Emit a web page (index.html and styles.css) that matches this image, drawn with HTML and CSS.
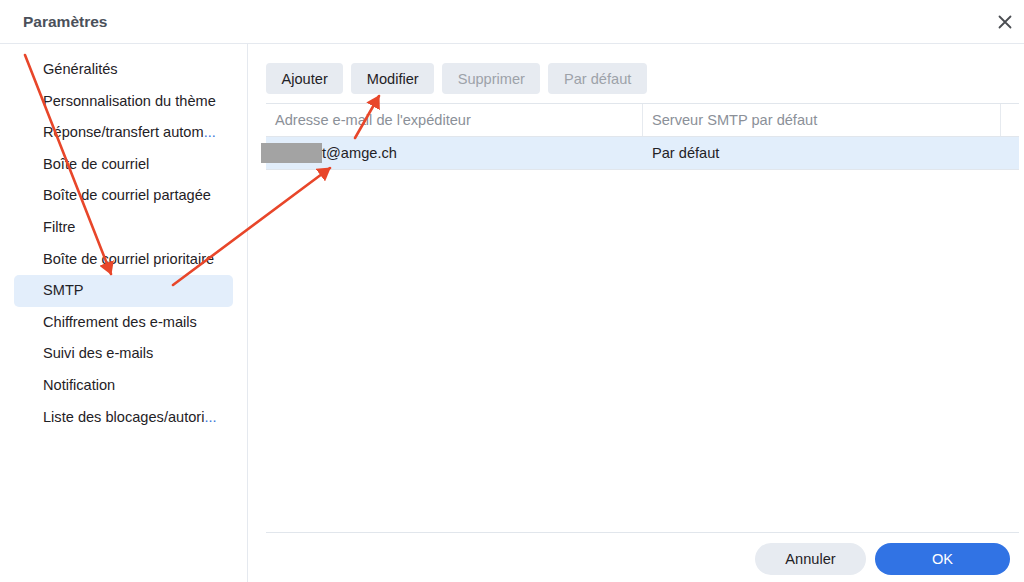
FILE: index.html
```html
<!DOCTYPE html>
<html lang="fr">
<head>
  <meta charset="UTF-8">
  <title>Paramètres</title>
  <link rel="stylesheet" href="styles.css">
</head>
<body>

<div class="dialog">
  <div class="dialog-header">
    <h1 class="dialog-title">Paramètres</h1>
    <button class="close-btn" aria-label="Fermer">
      <svg width="14" height="14" viewBox="0 0 14 14"><path d="M1.5 1.5 L12.5 12.5 M12.5 1.5 L1.5 12.5" stroke="#4a4d52" stroke-width="1.8" stroke-linecap="round"/></svg>
    </button>
  </div>

  <div class="dialog-body">
    <!-- Menu -->
    <ul class="side-menu">
      <li class="menu-item">Généralités</li>
      <li class="menu-item">Personnalisation du thème</li>
      <li class="menu-item">Réponse/transfert autom<span class="dots">...</span></li>
      <li class="menu-item">Boîte de courriel</li>
      <li class="menu-item">Boîte de courriel partagée</li>
      <li class="menu-item">Filtre</li>
      <li class="menu-item">Boîte de courriel prioritaire</li>
      <li class="menu-item active">SMTP</li>
      <li class="menu-item">Chiffrement des e-mails</li>
      <li class="menu-item">Suivi des e-mails</li>
      <li class="menu-item">Notification</li>
      <li class="menu-item">Liste des blocages/autori<span class="dots">...</span></li>
    </ul>

    <!-- Contenu -->
    <div class="content">
      <div class="toolbar">
        <button class="tool-btn">Ajouter</button>
        <button class="tool-btn">Modifier</button>
        <button class="tool-btn disabled">Supprimer</button>
        <button class="tool-btn disabled">Par défaut</button>
      </div>

      <div class="grid">
        <div class="grid-row grid-head">
          <div class="cell col-mail">Adresse e-mail de l'expéditeur</div>
          <div class="cell col-server">Serveur SMTP par défaut</div>
          <div class="cell col-end"></div>
        </div>
        <div class="grid-row selected">
          <div class="cell col-mail"><span class="masked"></span>t@amge.ch</div>
          <div class="cell col-server">Par défaut</div>
          <div class="cell col-end"></div>
        </div>
      </div>

      <div class="footer">
        <button class="pill-btn">Annuler</button>
        <button class="pill-btn primary">OK</button>
      </div>
    </div>
  </div>
</div>

<!-- Flèches d'annotation -->
<svg class="annotations" width="1024" height="582" viewBox="0 0 1024 582">
  <defs>
    <marker id="head" markerWidth="6" markerHeight="6" refX="4.6" refY="3" orient="auto" markerUnits="strokeWidth">
      <path d="M0 0 L5 3 L0 6 Z" fill="#e8462a"/>
    </marker>
  </defs>
  <g stroke="#e8462a" stroke-width="2.6" stroke-linecap="round" fill="none">
    <line x1="25" y1="55" x2="111" y2="274" marker-end="url(#head)"/>
    <line x1="173" y1="285" x2="330" y2="168" marker-end="url(#head)"/>
    <line x1="355" y1="138" x2="379" y2="96" marker-end="url(#head)"/>
  </g>
</svg>

</body>
</html>
```

FILE: styles.css
```css
* {
  box-sizing: border-box;
}
body {
  margin: 0;
  width: 1024px;
  height: 582px;
  overflow: hidden;
  background: #ffffff;
  font-family: "Liberation Sans", Arial, sans-serif;
  color: #1f2226;
  font-size: 14.6px;
}
.dialog {
  display: flex;
  flex-direction: column;
  height: 582px;
}
.dialog-header {
  height: 44px;
  display: flex;
  align-items: center;
  justify-content: space-between;
  padding: 0 8px 0 23px;
  border-bottom: 1px solid #e5e9ef;
}
.dialog-title {
  margin: 0;
  font-size: 15.5px;
  font-weight: bold;
  color: #4b505a;
}
.close-btn {
  background: none;
  border: none;
  padding: 4px;
  display: flex;
  cursor: pointer;
}
.dialog-body {
  flex: 1;
  display: flex;
}
.side-menu {
  list-style: none;
  margin: 0;
  padding: 10px 0 0 14px;
  width: 248px;
  border-right: 1px solid #e5e9ef;
}
.menu-item {
  width: 219px;
  height: 31.6px;
  line-height: 31.6px;
  padding-left: 29px;
  border-radius: 5px;
  white-space: nowrap;
  overflow: hidden;
  color: #1f2226;
}
.menu-item.active {
  background: #e3eefb;
}
.dots {
  color: #3a78d8;
}
.content {
  flex: 1;
  display: flex;
  flex-direction: column;
  padding: 19px 5px 0 18px;
}
.toolbar {
  display: flex;
  gap: 8px;
  margin-bottom: 9px;
}
.tool-btn {
  height: 31px;
  padding: 0 15.5px;
  border: none;
  border-radius: 4px;
  background: #e7ebf1;
  font-family: inherit;
  font-size: 14.6px;
  color: #1f2226;
}
.tool-btn.disabled {
  color: #9da2a9;
}
.grid {
  flex: 1;
  border-top: 1px solid #e1e6ec;
}
.grid-row {
  display: flex;
  height: 33px;
  border-bottom: 1px solid #e1e6ec;
}
.grid-head {
  color: #8b9098;
}
.grid-row.selected {
  background: #e2eefb;
}
.cell {
  display: flex;
  align-items: center;
  padding-left: 9px;
  white-space: nowrap;
}
.col-mail {
  width: 377px;
}
.col-server {
  width: 358px;
}
.col-end {
  flex: 1;
}
.grid-head .col-mail,
.grid-head .col-server {
  border-right: 1px solid #e6eaef;
}
.masked {
  display: inline-block;
  width: 61px;
  height: 20px;
  margin-left: -14px;
  background: #a3a3a3;
}
.footer {
  height: 50px;
  border-top: 1px solid #e1e6ec;
  display: flex;
  justify-content: flex-end;
  align-items: flex-start;
  gap: 9px;
  padding: 10px 9px 0 0;
}
.pill-btn {
  height: 32px;
  width: 111px;
  border: none;
  border-radius: 16px;
  background: #e7ebf1;
  font-family: inherit;
  font-size: 14.6px;
  color: #1f2226;
}
.pill-btn.primary {
  width: 135px;
  background: #3173e4;
  color: #ffffff;
}
.annotations {
  position: absolute;
  left: 0;
  top: 0;
  pointer-events: none;
}
```
